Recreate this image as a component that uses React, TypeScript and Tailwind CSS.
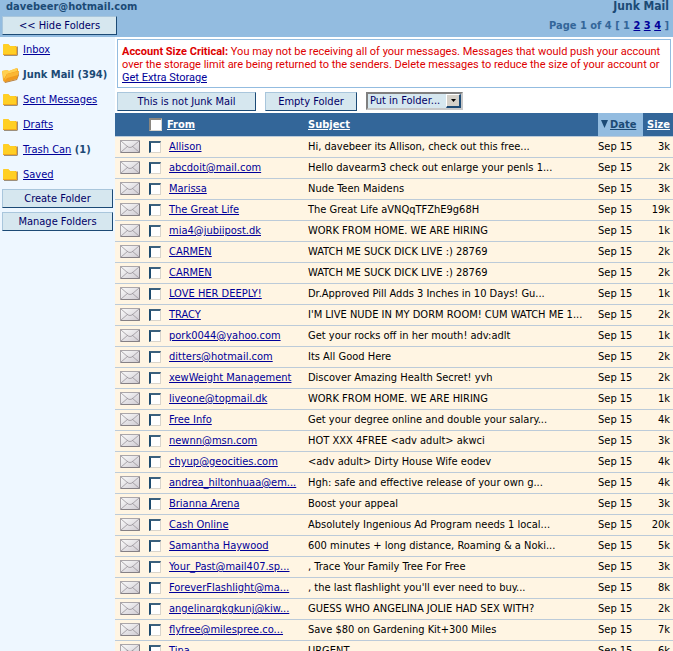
import type { ReactNode } from "react";

type Folder = { name: string; count?: number; active?: boolean };
type Message = [from: string, subject: string, size: string];

const folders: Folder[] = [
  { name: "Inbox" },
  { name: "Junk Mail", count: 394, active: true },
  { name: "Sent Messages" },
  { name: "Drafts" },
  { name: "Trash Can", count: 1 },
  { name: "Saved" },
];

const messages: Message[] = [
  ["Allison", "Hi, davebeer its Allison, check out this free...", "3k"],
  ["abcdoit@mail.com", "Hello davearm3 check out enlarge your penls 1...", "2k"],
  ["Marissa", "Nude Teen Maidens", "3k"],
  ["The Great Life", "The Great Life aVNQqTFZhE9g68H", "19k"],
  ["mia4@jubiipost.dk", "WORK FROM HOME. WE ARE HIRING", "1k"],
  ["CARMEN", "WATCH ME SUCK DICK LIVE :) 28769", "2k"],
  ["CARMEN", "WATCH ME SUCK DICK LIVE :) 28769", "2k"],
  ["LOVE HER DEEPLY!", "Dr.Approved Pill Adds 3 Inches in 10 Days! Gu...", "1k"],
  ["TRACY", "I'M LIVE NUDE IN MY DORM ROOM! CUM WATCH ME 1...", "2k"],
  ["pork0044@yahoo.com", "Get your rocks off in her mouth! adv:adlt", "1k"],
  ["ditters@hotmail.com", "Its All Good Here", "2k"],
  ["xewWeight Management", "Discover Amazing Health Secret! yvh", "2k"],
  ["liveone@topmail.dk", "WORK FROM HOME. WE ARE HIRING", "1k"],
  ["Free Info", "Get your degree online and double your salary...", "4k"],
  ["newnn@msn.com", "HOT XXX 4FREE <adv adult> akwci", "3k"],
  ["chyup@geocities.com", "<adv adult> Dirty House Wife eodev", "4k"],
  ["andrea_hiltonhuaa@em...", "Hgh: safe and effective release of your own g...", "4k"],
  ["Brianna Arena", "Boost your appeal", "3k"],
  ["Cash Online", "Absolutely Ingenious Ad Program needs 1 local...", "20k"],
  ["Samantha Haywood", "600 minutes + long distance, Roaming & a Noki...", "5k"],
  ["Your_Past@mail407.sp...", ", Trace Your Family Tree For Free", "3k"],
  ["ForeverFlashlight@ma...", ", the last flashlight you'll ever need to buy...", "8k"],
  ["angelinarqkgkunj@kiw...", "GUESS WHO ANGELINA JOLIE HAD SEX WITH?", "2k"],
  ["flyfree@milespree.co...", "Save $80 on Gardening Kit+300 Miles", "7k"],
  ["Tina", "URGENT", "6k"],
];

function Button({ className, children }: { className: string; children: ReactNode }) {
  return (
    <button
      type="button"
      className={`h-[19px] border border-t-[#a9c6dc] border-l-[#a9c6dc] border-r-[#1c4a75] border-b-[#1c4a75] bg-[#d6e7ef] text-center leading-[17px] text-[#000066] ${className}`}
    >
      {children}
    </button>
  );
}

function Link({ className = "text-[#000099]", children }: { className?: string; children: ReactNode }) {
  return (
    <a href="#" className={`underline underline-offset-1 ${className}`}>
      {children}
    </a>
  );
}

function FolderIcon({ open }: { open?: boolean }) {
  if (open) {
    return (
      <svg width="18" height="16" viewBox="0 0 18 16" aria-hidden="true">
        <path d="M0 4l5-1 2 1 8-3 1 1v9L4 15 1 13z" fill="#f7b02a" />
        <path d="M0 4l5-1 2 1 8-3v3L5 7l-3 5z" fill="#ffd050" />
        <path d="M5 7l12-3-2 8-12 3-2-1z" fill="#f09a1e" />
        <path d="M5 7l12-3-1 4-11 3-3 3z" fill="#fbb733" />
        <path d="M2 14l1 1 12-3 2-7v3l-2 5-12 3z" fill="#b9803c" />
      </svg>
    );
  }
  return (
    <svg width="18" height="16" viewBox="0 0 18 16" aria-hidden="true">
      <path d="M2 13h13V4l1 1v8l-1 1H2z" fill="#9c8f7c" />
      <path d="M1 3l1-1h4l2 2h6l1 1v8H1z" fill="#f2a81d" />
      <path d="M1 3l1-1h4l2 2h5l1 1v7H1z" fill="#ffcf24" />
    </svg>
  );
}

function Envelope() {
  return (
    <svg className="block" width="20" height="13" viewBox="0 0 20 13" aria-hidden="true">
      <defs>
        <linearGradient id="paper" x1="0" y1="0" x2="1" y2="1">
          <stop offset="0" stopColor="#fbfbfb" />
          <stop offset="1" stopColor="#cfcbd2" />
        </linearGradient>
      </defs>
      <rect x="0.5" y="0.5" width="19" height="12" fill="url(#paper)" stroke="#aaa6aa" />
      <path d="M19.5 1v11.5H1" fill="none" stroke="#858085" />
      <path d="M1 1l7 6q2 1 4 0l7-6M1 12l7-6M19 12l-7-6" fill="none" stroke="#99949a" strokeWidth="0.8" />
    </svg>
  );
}

function Checkbox({ label, header }: { label: string; header?: boolean }) {
  return (
    <input
      type="checkbox"
      aria-label={label}
      className={`block appearance-none border-t-2 border-l-2 border-r border-b border-r-[#d8d4cc] border-b-[#d8d4cc] bg-white ${
        header ? "size-[13px] border-t-[#8a8680] border-l-[#8a8680]" : "size-3 border-t-[#3b617e] border-l-[#1c4a6e]"
      }`}
    />
  );
}

export default function App() {
  return (
    <div className="flex h-screen flex-col overflow-hidden bg-white font-['DejaVu_Sans_Condensed','DejaVu_Sans',sans-serif] text-[11px] leading-[13px] text-black">
      <header className="flex h-[37px] shrink-0 justify-between bg-[#93bce0] pr-1 pl-[2px] font-bold text-[#1c4a75]">
        <div className="flex flex-col items-start gap-[3px]">
          <span className="pl-1">davebeer@hotmail.com</span>
          <Button className="w-[115px] font-normal">&lt;&lt; Hide Folders</Button>
        </div>
        <div className="flex flex-col items-end gap-[6px]">
          <h1 className="text-xs leading-[13px]">Junk Mail</h1>
          <p className="text-[#336699]">
            Page 1 of 4 [ 1 <Link>2</Link> <Link>3</Link> <Link>4</Link> ]
          </p>
        </div>
      </header>

      <div className="flex min-h-0 flex-1">
        <aside className="w-[115px] shrink-0 bg-[#eef7ff] pr-[2px] pl-[2px]">
          <ul>
            {folders.map((f) => (
              <li key={f.name} className="flex h-[25px] items-center gap-[3px] whitespace-nowrap">
                <FolderIcon open={f.active} />
                {f.active ? (
                  <b className="text-[#1c4a75]">
                    {f.name} ({f.count})
                  </b>
                ) : (
                  <span>
                    <Link>{f.name}</Link>
                    {f.count && <b className="text-[#1c4a75]"> ({f.count})</b>}
                  </span>
                )}
              </li>
            ))}
          </ul>
          <div className="mt-[2px] flex flex-col gap-1">
            <Button className="w-full">Create Folder</Button>
            <Button className="w-full">Manage Folders</Button>
          </div>
        </aside>

        <main className="min-w-0 flex-1 pt-[2px]">
          <p className="mx-[2px] min-h-[49px] border border-[#93bce0] pt-[5px] pl-1 font-[Roboto,sans-serif] text-[#dd0000]">
            <b>Account Size Critical:</b> You may not be receiving all of your messages. Messages that would push your
            account over the storage limit are being returned to the senders. Delete messages to reduce the size of your
            account or
            <br />
            <Link>Get Extra Storage</Link>
          </p>

          <div className="flex gap-[9px] px-[2px] pt-1 pb-[2px]">
            <Button className="w-[139px]">This is not Junk Mail</Button>
            <Button className="w-[92px]">Empty Folder</Button>
            <div className="relative h-[18px] w-[97px] border-2 border-[#c8c8c8] border-t-[#808080] border-l-[#808080] bg-[#d6e7ef]">
              <select
                aria-label="Put in Folder"
                className="block h-[14px] w-full appearance-none bg-transparent pl-[2px] leading-[14px] text-[#000066]"
              >
                <option>Put in Folder...</option>
              </select>
              <span className="pointer-events-none absolute inset-y-0 right-0 flex w-[15px] items-center justify-center border border-r-2 border-b-2 border-white border-r-[#1c4a75] border-b-[#1c4a75] bg-[#d4d0c8]">
                <svg width="5" height="3" viewBox="0 0 5 3" aria-hidden="true">
                  <path d="M0 0h5L2.5 3z" fill="#000" />
                </svg>
              </span>
            </div>
          </div>

          <table className="w-full table-fixed border-collapse whitespace-nowrap bg-[#fff5e3]">
            <colgroup>
              <col className="w-[34px]" />
              <col className="w-[18px]" />
              <col className="w-[141px]" />
              <col />
              <col className="w-[45px]" />
              <col className="w-[30px]" />
            </colgroup>
            <thead>
              <tr className="h-[23px] border-b border-[#bccbd9] bg-[#336699] text-left text-white">
                <td />
                <td className="p-0">
                  <Checkbox label="Select all messages" header />
                </td>
                <th className="p-0">
                  <Link className="text-white">From</Link>
                </th>
                <th className="p-0">
                  <Link className="text-white">Subject</Link>
                </th>
                <th className="bg-[#93bce0] p-0 text-[#1c4a75]">
                  <span className="flex items-center gap-[2px] pl-[3px]">
                    <svg width="7" height="8" viewBox="0 0 7 8" aria-hidden="true">
                      <path d="M0 0h7L3.5 8z" fill="#1c4a75" />
                    </svg>
                    <Link className="text-[#1c4a75]">Date</Link>
                  </span>
                </th>
                <th className="p-0 pr-[3px] text-right">
                  <Link className="text-white">Size</Link>
                </th>
              </tr>
            </thead>
            <tbody>
              {messages.map(([from, subject, size], i) => (
                <tr key={i} className="h-[21px] border-b border-[#bccbd9]">
                  <td className="p-0 pl-[5px]">
                    <Envelope />
                  </td>
                  <td className="p-0">
                    <Checkbox label={`Select message from ${from}`} />
                  </td>
                  <td className="p-0 pl-[2px]">
                    <Link>{from}</Link>
                  </td>
                  <td className="p-0">{subject}</td>
                  <td className="p-0">Sep 15</td>
                  <td className="p-0 pr-[3px] text-right">{size}</td>
                </tr>
              ))}
            </tbody>
          </table>
        </main>
      </div>
    </div>
  );
}
